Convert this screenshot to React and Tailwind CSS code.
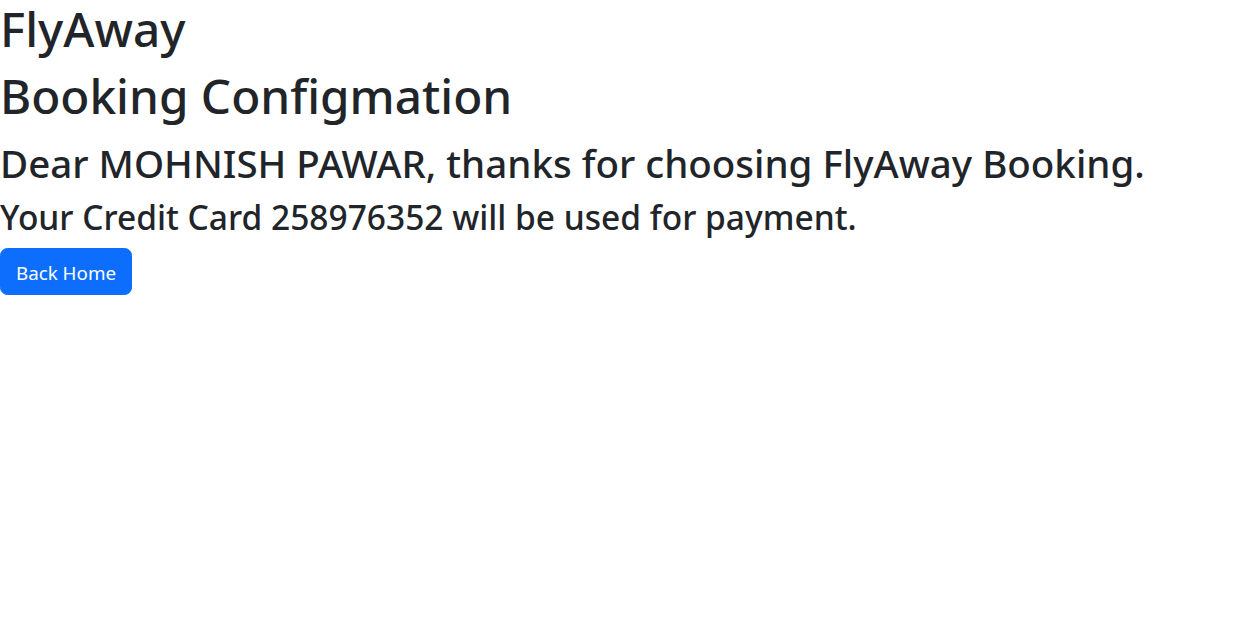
export default function App() {
  return (
    <div className="min-h-[641px] w-full bg-white text-[#212529]" style={{ fontFamily: '"Noto Sans", "Open Sans", sans-serif' }}>
      <h1 className="m-0 text-[47.7px] font-medium leading-[58.4px] whitespace-nowrap">FlyAway</h1>
      <h1 className="m-0 text-[47.7px] font-medium leading-[76.2px] whitespace-nowrap">Booking Configmation</h1>
      <h2 className="m-0 text-[38.5px] font-medium leading-[56.4px] whitespace-nowrap">
        Dear MOHNISH PAWAR, thanks for choosing FlyAway Booking.
      </h2>
      <h3 className="m-0 text-[33.5px] font-medium leading-[52px] whitespace-nowrap">
        Your Credit Card 258976352 will be used for payment.
      </h3>
      <button
        type="button"
        className="mt-[4.7px] flex h-[47.5px] w-[132px] items-center justify-center rounded-[7.5px] border border-[#0d6efd] bg-[#0d6efd] pt-[3px] text-[18.8px] font-normal text-white"
      >
        Back Home
      </button>
    </div>
  );
}
